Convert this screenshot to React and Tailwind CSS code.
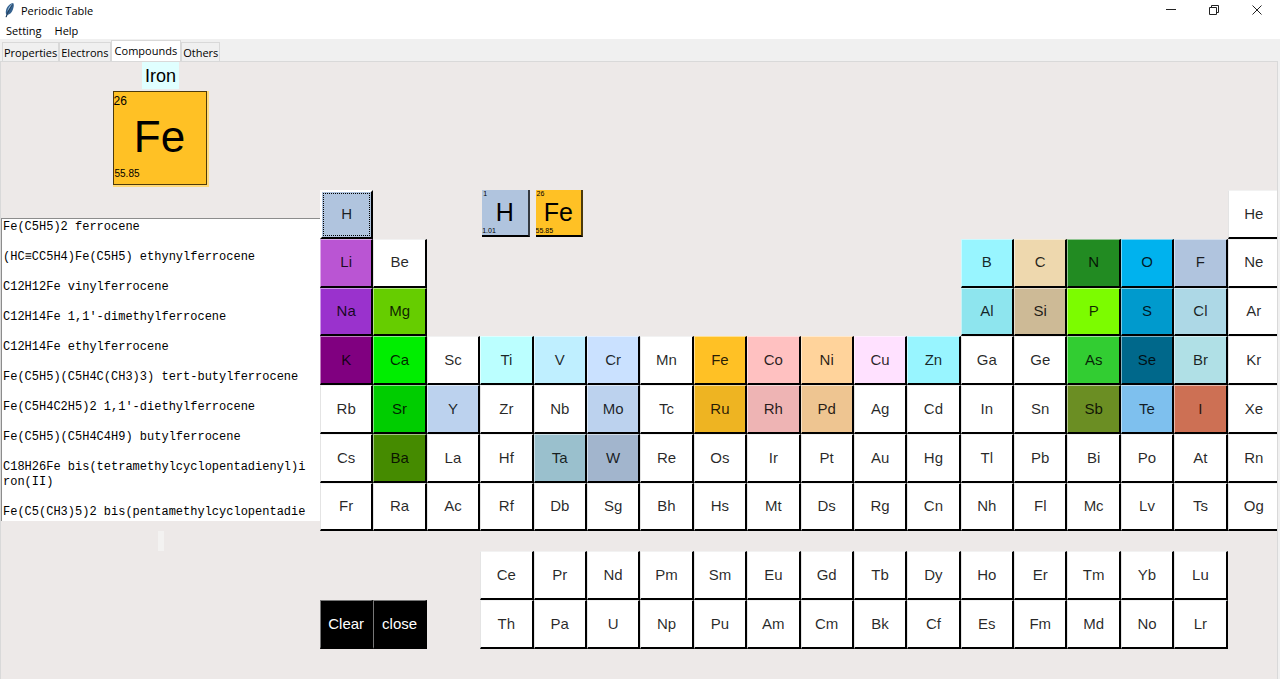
import { useState } from "react";

const EMPTY = "bg-white";

const FILLS = {
  H: "bg-[#b0c4de]",
  Li: "bg-[#ba55d3]",
  Na: "bg-[#9a32cd]",
  K: "bg-[#800080]",
  Mg: "bg-[#66cd00]",
  Ca: "bg-[#00ee00]",
  Sr: "bg-[#00cd00]",
  Ba: "bg-[#458b00]",
  Y: "bg-[#bcd2ee]",
  Ti: "bg-[#bbffff]",
  V: "bg-[#bfefff]",
  Cr: "bg-[#cae1ff]",
  Mo: "bg-[#bcd2ee]",
  Ta: "bg-[#9ac0cd]",
  W: "bg-[#a2b5cd]",
  Fe: "bg-[#ffc125]",
  Ru: "bg-[#eeb422]",
  Co: "bg-[#ffc1c1]",
  Rh: "bg-[#eeb4b4]",
  Ni: "bg-[#ffd39b]",
  Pd: "bg-[#eec591]",
  Cu: "bg-[#ffe1ff]",
  Zn: "bg-[#98f5ff]",
  B: "bg-[#98f5ff]",
  Al: "bg-[#8ee5ee]",
  C: "bg-[#eed8ae]",
  Si: "bg-[#cdba96]",
  N: "bg-[#228b22]",
  P: "bg-[#7cfc00]",
  As: "bg-[#32cd32]",
  Sb: "bg-[#6b8e23]",
  O: "bg-[#00b2ee]",
  S: "bg-[#009acd]",
  Se: "bg-[#00688b]",
  Te: "bg-[#7ec0ee]",
  F: "bg-[#b0c4de]",
  Cl: "bg-[#add8e6]",
  Br: "bg-[#b0e0e6]",
  I: "bg-[#cd7054]",
};

// "." is an empty place, "*" a selected-element card, "!" a command button.
const ROWS = [
  "H . . *H *Fe . . . . . . . . . . . . He",
  "Li Be . . . . . . . . . . B C N O F Ne",
  "Na Mg . . . . . . . . . . Al Si P S Cl Ar",
  "K Ca Sc Ti V Cr Mn Fe Co Ni Cu Zn Ga Ge As Se Br Kr",
  "Rb Sr Y Zr Nb Mo Tc Ru Rh Pd Ag Cd In Sn Sb Te I Xe",
  "Cs Ba La Hf Ta W Re Os Ir Pt Au Hg Tl Pb Bi Po At Rn",
  "Fr Ra Ac Rf Db Sg Bh Hs Mt Ds Rg Cn Nh Fl Mc Lv Ts Og",
  ". . . . . . . . . . . . . . . . . .",
  ". . . Ce Pr Nd Pm Sm Eu Gd Tb Dy Ho Er Tm Yb Lu .",
  "!Clear !close . Th Pa U Np Pu Am Cm Bk Cf Es Fm Md No Lr .",
];

const COMPOUNDS = [
  "Fe(C5H5)2 ferrocene",
  "(HC≡CC5H4)Fe(C5H5) ethynylferrocene",
  "C12H12Fe vinylferrocene",
  "C12H14Fe 1,1'-dimethylferrocene",
  "C12H14Fe ethylferrocene",
  "Fe(C5H5)(C5H4C(CH3)3) tert-butylferrocene",
  "Fe(C5H4C2H5)2 1,1'-diethylferrocene",
  "Fe(C5H5)(C5H4C4H9) butylferrocene",
  "C18H26Fe bis(tetramethylcyclopentadienyl)i\nron(II)",
  "Fe(C5(CH3)5)2 bis(pentamethylcyclopentadie",
].join("\n\n");

const DETAILS = {
  H: { number: "1", mass: "1.01" },
  Fe: { number: "26", mass: "55.85" },
};

const TABS = ["Properties", "Electrons", "Compounds", "Others"];

function Feather() {
  return (
    <svg viewBox="0 0 12 16" className="h-4 w-3" aria-hidden="true">
      <path d="M9.2 1C6 1.300 2.800 4.600 2 8.500c-.4 1.800-.2 3.200.4 4.100L1.600 15.200l1 .1.900-2.400c2.300-.2 4.500-2.500 5.400-5.300.8-2.500 1.500-4.600.3-6.600z" fill="#35628f" />
      <path d="M8.900 1.500C5.700 3 4 6 3.200 9.800c1.700-2 3.700-5.300 5.700-8.300z" fill="#8db4d6" />
      <path d="M8.500 2.500C6 6 3.800 10 2.100 15" fill="none" stroke="#1b2b3c" strokeWidth=".7" />
    </svg>
  );
}

function WindowButton({ label, children }) {
  return (
    <button aria-label={label} className="flex h-5 w-[43px] items-center justify-center">
      <svg viewBox="0 0 12 12" className="size-3" fill="none" stroke="#222" aria-hidden="true">
        {children}
      </svg>
    </button>
  );
}

function ElementButton({ symbol }) {
  const fill = FILLS[symbol];
  if (symbol === "H")
    return (
      <button
        className={`flex items-stretch border-2 border-t-white border-r-black border-b-black border-l-white p-px text-black/85 ${fill}`}
      >
        <span className="flex flex-1 items-center justify-center border border-dotted border-black">{symbol}</span>
      </button>
    );
  const edge = fill ? "border-t-white/50 border-l-white/50" : "border-t-black/5 border-l-black/10";
  return (
    <button
      className={`flex items-center justify-center border-t border-r-2 border-b-2 border-l border-r-black border-b-black text-black/85 ${edge} ${fill || EMPTY}`}
    >
      {symbol}
    </button>
  );
}

function SmallCard({ symbol }) {
  const { number, mass } = DETAILS[symbol];
  return (
    <div className={`mr-1 mb-[2px] ml-[2px] flex flex-col justify-between overflow-hidden border-r-2 border-b-2 border-r-black/70 border-b-black ${FILLS[symbol]}`}>
      <span className="pl-px text-[7px] leading-2">{number}</span>
      <span className="text-center text-[25px] leading-7">{symbol}</span>
      <span className="text-[7px] leading-2">{mass}</span>
    </div>
  );
}

function Cell({ code }) {
  if (code === ".") return <span />;
  if (code[0] === "*") return <SmallCard symbol={code.slice(1)} />;
  if (code[0] === "!")
    return (
      <button className="flex items-center justify-center border-t border-r-2 border-b-2 border-l border-t-[#777] border-r-black border-b-black border-l-[#777] bg-black text-white">
        {code.slice(1)}
      </button>
    );
  return <ElementButton symbol={code} />;
}

export default function App() {
  const [tab, setTab] = useState("Compounds");
  return (
    <div className="flex min-h-screen flex-col overflow-hidden bg-[#f0f0f0] font-['Liberation_Sans',Arial,sans-serif] text-black">
      <header className="bg-white font-['Open_Sans','Noto_Sans',sans-serif] text-[11px]">
        <div className="flex h-5 items-center pr-[2px] pl-1">
          <Feather />
          <h1 className="ml-[5px] flex-1 pt-[2px]">Periodic Table</h1>
          <WindowButton label="Minimize">
            <path d="M1 5.500h10" />
          </WindowButton>
          <WindowButton label="Restore">
            <path d="M1.500 3.500h7v7h-7zM3.500 3.500v-2h7v7h-2" />
          </WindowButton>
          <WindowButton label="Close">
            <path d="M1.500 1.500l9 9M10.500 1.500l-9 9" />
          </WindowButton>
        </div>
        <nav className="flex h-[19px] items-end gap-[13px] pl-[6px]">
          <button>Setting</button>
          <button>Help</button>
        </nav>
      </header>

      <div role="tablist" className="flex h-[22px] items-end pl-[2px] font-['Open_Sans','Noto_Sans',sans-serif] text-[11px]">
        {TABS.map((name) => (
          <button
            key={name}
            role="tab"
            aria-selected={name === tab}
            onClick={() => setTab(name)}
            className={
              name === tab
                ? "h-[21px] border-x border-t border-[#d9d9d9] bg-white px-[3px]"
                : "h-[19px] border-x border-t border-[#d9d9d9] px-px pt-[2px]"
            }
          >
            {name}
          </button>
        ))}
      </div>

      <main className="mr-[2px] flex flex-1 overflow-hidden border-x border-t border-[#d9d9d9] bg-[#ede9e8]">
        <section className="flex w-[319px] shrink-0 flex-col items-center">
          <h2 className="bg-[#e0ffff] px-[3px] pt-px text-[18px] leading-[26px]">Iron</h2>
          <div className="mt-[2px] flex size-24 flex-col border-r-2 border-b-2 border-[#ffda7c] bg-[#ffc125]">
            <div className="flex flex-1 flex-col justify-between border border-[#4d3a0b]">
              <span className="text-[12px] leading-[18px]">26</span>
              <span className="text-center text-[44px] leading-[50px]">Fe</span>
              <span className="pl-px text-[10px] leading-[20px]">55.85</span>
            </div>
          </div>
          <textarea
            readOnly
            wrap="off"
            aria-label="Compounds"
            defaultValue={COMPOUNDS}
            className="mt-[31px] h-[303px] w-full resize-none overflow-hidden border-t border-l border-[#8c8c8c] bg-white pt-px pl-px font-['Liberation_Mono','Courier_New',monospace] text-[12px] leading-[15px] outline-none"
          />
          <span className="mt-[10px] h-5 w-[6px] bg-[#f3f2f1]" />
        </section>

        <section className="mt-32 -mr-1 grid h-[459px] flex-1 grid-cols-[repeat(18,minmax(0,1fr))] grid-rows-[repeat(7,minmax(0,1fr))_20px_repeat(2,minmax(0,1fr))] self-start text-[15px]">
          {ROWS.flatMap((row, r) => row.split(" ").map((code, c) => <Cell key={`${r}-${c}`} code={code} />))}
        </section>
      </main>
    </div>
  );
}
